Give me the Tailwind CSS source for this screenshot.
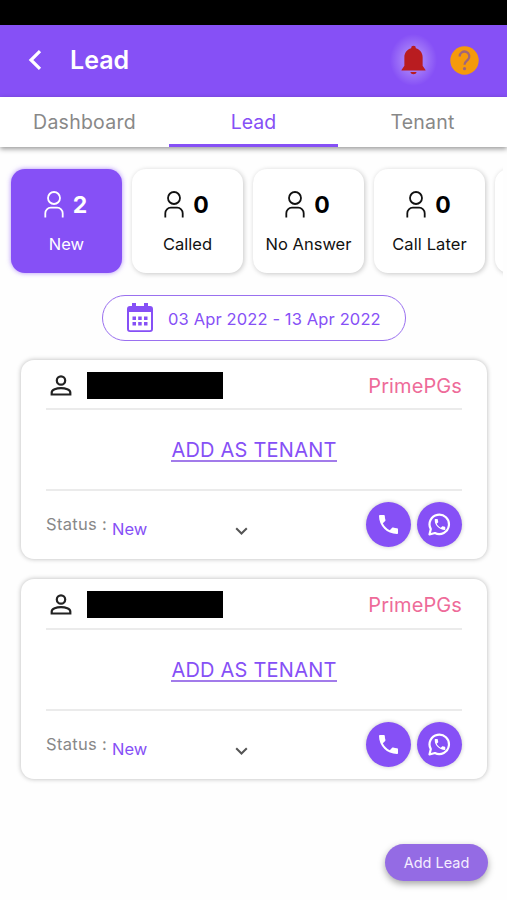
<!DOCTYPE html>
<html lang="en">
<head>
<meta charset="utf-8">
<title>Lead</title>
<script src="https://cdn.jsdelivr.net/npm/@tailwindcss/browser@4"></script>
</head>
<body class="bg-white">
<svg class="hidden">
  <symbol id="user" viewBox="0 0 20 27"><g fill="none" stroke="currentColor" stroke-width="1.800"><circle cx="10" cy="7" r="6"/><path d="M1.300 26.500v-4.300a5.500 5.500 0 0 1 5.500-5.500h6.400a5.500 5.500 0 0 1 5.500 5.500v4.300"/></g></symbol>
  <symbol id="person" viewBox="0 0 22 21"><g fill="none" stroke="currentColor" stroke-width="2.200"><circle cx="11" cy="5.500" r="4.200"/><path d="M1.700 19.500v-1.900c0-2.900 4.800-4.500 9.300-4.500s9.300 1.600 9.300 4.500v1.900z"/></g></symbol>
  <symbol id="phone" viewBox="3 3 18 18"><path fill="currentColor" d="M6.620 10.790c1.440 2.830 3.760 5.140 6.590 6.590l2.200-2.200c.27-.27.67-.36 1.020-.24 1.120.37 2.330.57 3.570.57.55 0 1 .45 1 1V20c0 .55-.45 1-1 1-9.390 0-17-7.610-17-17 0-.55.45-1 1-1h3.500c.55 0 1 .45 1 1 0 1.250.2 2.450.57 3.570.11.35.03.74-.25 1.020l-2.200 2.200z"/></symbol>
</svg>
<div class="relative flex h-[900px] w-[507px] flex-col overflow-hidden bg-[#fefefe] font-['Inter',sans-serif]">
  <div class="h-[25px] shrink-0 bg-black"></div>
  <header class="flex h-[72px] shrink-0 items-center bg-[#8650f6] pr-[28px] pl-[28px] text-white">
    <svg class="mt-[-2px] h-[20px] w-[14px]" viewBox="0 0 14 20"><path d="M12 1.200 3 10l9 8.800" fill="none" stroke="currentColor" stroke-width="3.200"/></svg>
    <h1 class="mt-[-1px] ml-[28px] flex-1 text-[25px] leading-none font-semibold">Lead</h1>
    <div class="relative mt-[-2px] mr-[24px] flex">
      <div class="absolute -inset-[11px] rounded-full bg-[radial-gradient(closest-side,rgba(255,255,255,.38),rgba(255,255,255,.22)_50%,transparent)]"></div>
      <svg class="relative h-[30px] w-[25px]" viewBox="0 0 26 30" fill="#b91c20"><path d="M10.500 2.800a2.500 2.500 0 0 1 5 0c4.200 1.200 7 4.800 7 9.300v8.900l3 4.500V26H.5v-.500l3-4.500v-8.900c0-4.500 2.800-8.100 7-9.300zM9.800 27.500h6.400c-.3 1.500-1.600 2.300-3.200 2.300s-2.900-.8-3.200-2.300z"/></svg>
    </div>
    <svg class="mt-[-2px] h-[29px] w-[29px]" viewBox="0 0 29 29"><circle cx="14.500" cy="14.500" r="14.200" fill="#f59a0b"/><path d="M9.700 10.500a4.800 4.800 0 1 1 8.100 3.300c-1.700 1.600-3.300 2.400-3.300 5" fill="none" stroke="#a0667c" stroke-width="2.300"/><circle cx="14.500" cy="22.700" r="1.600" fill="#a0667c"/></svg>
  </header>
  <nav class="relative z-10 grid h-[50px] shrink-0 grid-cols-3 bg-white text-center text-[19.500px] leading-[51px] text-[#888] shadow-[0_2px_5px_rgba(0,0,0,.4)]">
    <div class="h-[50px] tracking-[.25px]">Dashboard</div>
    <div class="h-[50px] border-b-[3px] border-[#8650f6] text-[#8650f6]">Lead</div>
    <div class="h-[50px] tracking-[.2px]">Tenant</div>
  </nav>
  <div class="mr-[4px] flex shrink-0 gap-[10px] overflow-hidden pt-[22px] pb-[14px] pl-[11px] text-[#111]">
    <div class="flex h-[104px] w-[111px] shrink-0 flex-col items-center rounded-[14px] bg-[#8650f6] pt-[21px] text-white shadow-[0_0_5px_rgba(134,80,246,.65)]">
      <div class="mr-[2px] flex items-center gap-[9px]"><svg class="h-[27px] w-[20px]"><use href="#user"/></svg><b class="mt-[2px] text-[23px] leading-[27px]">2</b></div>
      <div class="mt-[14px] text-[16.500px] leading-[22px]">New</div>
    </div>
    <div class="flex h-[104px] w-[111px] shrink-0 flex-col items-center rounded-[14px] bg-white pt-[21px] shadow-[1px_1px_5px_rgba(0,0,0,.22)]">
      <div class="mr-[2px] flex items-center gap-[9px]"><svg class="h-[27px] w-[20px]"><use href="#user"/></svg><b class="mt-[2px] text-[23px] leading-[27px] text-black">0</b></div>
      <div class="mt-[14px] text-[16.500px] leading-[22px]">Called</div>
    </div>
    <div class="flex h-[104px] w-[111px] shrink-0 flex-col items-center rounded-[14px] bg-white pt-[21px] shadow-[1px_1px_5px_rgba(0,0,0,.22)]">
      <div class="mr-[2px] flex items-center gap-[9px]"><svg class="h-[27px] w-[20px]"><use href="#user"/></svg><b class="mt-[2px] text-[23px] leading-[27px] text-black">0</b></div>
      <div class="mt-[14px] text-[16.500px] leading-[22px]">No Answer</div>
    </div>
    <div class="flex h-[104px] w-[111px] shrink-0 flex-col items-center rounded-[14px] bg-white pt-[21px] shadow-[1px_1px_5px_rgba(0,0,0,.22)]">
      <div class="mr-[2px] flex items-center gap-[9px]"><svg class="h-[27px] w-[20px]"><use href="#user"/></svg><b class="mt-[2px] text-[23px] leading-[27px] text-black">0</b></div>
      <div class="mt-[14px] text-[16.500px] leading-[22px] tracking-[.1px]">Call Later</div>
    </div>
    <div class="h-[104px] w-[111px] shrink-0 rounded-[14px] bg-white shadow-[1px_1px_5px_rgba(0,0,0,.22)]"></div>
  </div>
  <div class="mt-[8px] ml-[102px] flex h-[46px] w-[304px] shrink-0 items-center rounded-full border-[1.500px] border-[#9a70ef] bg-white pl-[24px] text-[#8650f6]">
    <svg class="h-[30px] w-[26px]" viewBox="0 0 26 30"><g fill="currentColor"><path d="M5 0h4v4H5zM17 0h4v4h-4z"/><path fill-rule="evenodd" d="M3 3h20a3 3 0 0 1 3 3v20a3 3 0 0 1-3 3H3a3 3 0 0 1-3-3V6a3 3 0 0 1 3-3zM2 9v17.200a1 1 0 0 0 1 1h20a1 1 0 0 0 1-1V9z"/><path d="M5.500 13.500h3.500v3.500H5.500zM11.200 13.500h3.500v3.500h-3.500zM17 13.500h3.500v3.500H17zM5.500 19h3.500v3.500H5.500zM11.200 19h3.500v3.500h-3.500zM17 19h3.500v3.500H17z"/></g></svg>
    <span class="mt-[2px] ml-[15px] text-[16.500px] tracking-[.13px] whitespace-nowrap">03 Apr 2022 - 13 Apr 2022</span>
  </div>
  <main class="mt-[19px] flex shrink-0 flex-col gap-[20px] pr-[20px] pl-[21px]">
    <section class="h-[199px] rounded-[13px] bg-white px-[25px] shadow-[0_0_5px_rgba(0,0,0,.28)]">
      <div class="flex h-[50px] items-center border-b-2 border-[#ebebeb]">
        <svg class="mt-[2px] ml-[4px] h-[21px] w-[22px] text-[#222]"><use href="#person"/></svg>
        <div class="mt-[2px] ml-[15px] h-[27px] w-[136px] bg-black"></div>
        <div class="mt-[3px] ml-auto text-[20px] tracking-[.1px] text-[#ee6b99]">PrimePGs</div>
      </div>
      <div class="flex h-[81px] items-center justify-center border-b-2 border-[#ebebeb] pt-[3px] text-[20px] text-[#8650f6]"><span class="border-b-2 border-[#a27bea] leading-[20px] tracking-[.22px]">ADD AS TENANT</span></div>
      <div class="flex h-[66px] items-center text-[16.500px]">
        <span class="w-[66px] whitespace-nowrap tracking-[.3px] text-[#888]">Status :</span>
        <span class="mt-[10px] w-[123px] text-[#8650f6]">New</span>
        <svg class="mt-[14px] h-[8px] w-[13px]" viewBox="0 0 13 8"><path d="m1.200 1.200 5.300 5.300 5.300-5.300" fill="none" stroke="#555" stroke-width="2"/></svg>
        <div class="ml-auto flex gap-[6px] text-white">
          <div class="flex size-[45px] items-center justify-center rounded-full bg-[#8650f6] shadow-[0_0_4px_rgba(0,0,0,.22)]"><svg class="h-[19px] w-[19px]"><use href="#phone"/></svg></div>
          <div class="flex size-[45px] items-center justify-center rounded-full bg-[#8650f6] shadow-[0_0_4px_rgba(0,0,0,.22)]"><svg class="h-[23px] w-[23px]" viewBox="0 0 23 23"><path d="M2.800 16.100A9.700 9.700 0 1 1 6.900 20L1.500 21.500z" fill="none" stroke="currentColor" stroke-width="2.200" stroke-linejoin="round"/><use href="#phone" x="6.500" y="6" width="11" height="11"/></svg></div>
        </div>
      </div>
    </section>
    <section class="h-[200px] rounded-[13px] bg-white px-[25px] shadow-[0_0_5px_rgba(0,0,0,.28)]">
      <div class="flex h-[51px] items-center border-b-2 border-[#ebebeb]">
        <svg class="mt-[2px] ml-[4px] h-[21px] w-[22px] text-[#222]"><use href="#person"/></svg>
        <div class="mt-[2px] ml-[15px] h-[27px] w-[136px] bg-black"></div>
        <div class="mt-[3px] ml-auto text-[20px] tracking-[.1px] text-[#ee6b99]">PrimePGs</div>
      </div>
      <div class="flex h-[81px] items-center justify-center border-b-2 border-[#ebebeb] pt-[3px] text-[20px] text-[#8650f6]"><span class="border-b-2 border-[#a27bea] leading-[20px] tracking-[.22px]">ADD AS TENANT</span></div>
      <div class="flex h-[66px] items-center text-[16.500px]">
        <span class="w-[66px] whitespace-nowrap tracking-[.3px] text-[#888]">Status :</span>
        <span class="mt-[10px] w-[123px] text-[#8650f6]">New</span>
        <svg class="mt-[14px] h-[8px] w-[13px]" viewBox="0 0 13 8"><path d="m1.200 1.200 5.300 5.300 5.300-5.300" fill="none" stroke="#555" stroke-width="2"/></svg>
        <div class="ml-auto flex gap-[6px] text-white">
          <div class="flex size-[45px] items-center justify-center rounded-full bg-[#8650f6] shadow-[0_0_4px_rgba(0,0,0,.22)]"><svg class="h-[19px] w-[19px]"><use href="#phone"/></svg></div>
          <div class="flex size-[45px] items-center justify-center rounded-full bg-[#8650f6] shadow-[0_0_4px_rgba(0,0,0,.22)]"><svg class="h-[23px] w-[23px]" viewBox="0 0 23 23"><path d="M2.800 16.100A9.700 9.700 0 1 1 6.900 20L1.500 21.500z" fill="none" stroke="currentColor" stroke-width="2.200" stroke-linejoin="round"/><use href="#phone" x="6.500" y="6" width="11" height="11"/></svg></div>
        </div>
      </div>
    </section>
  </main>
  <button class="absolute right-[19px] bottom-[19px] h-[37px] w-[103px] rounded-full bg-[#946be4] text-[14.500px] text-[#f5eeff] shadow-[0_3px_7px_rgba(0,0,0,.35)]">Add Lead</button>
</div>
</body>
</html>
